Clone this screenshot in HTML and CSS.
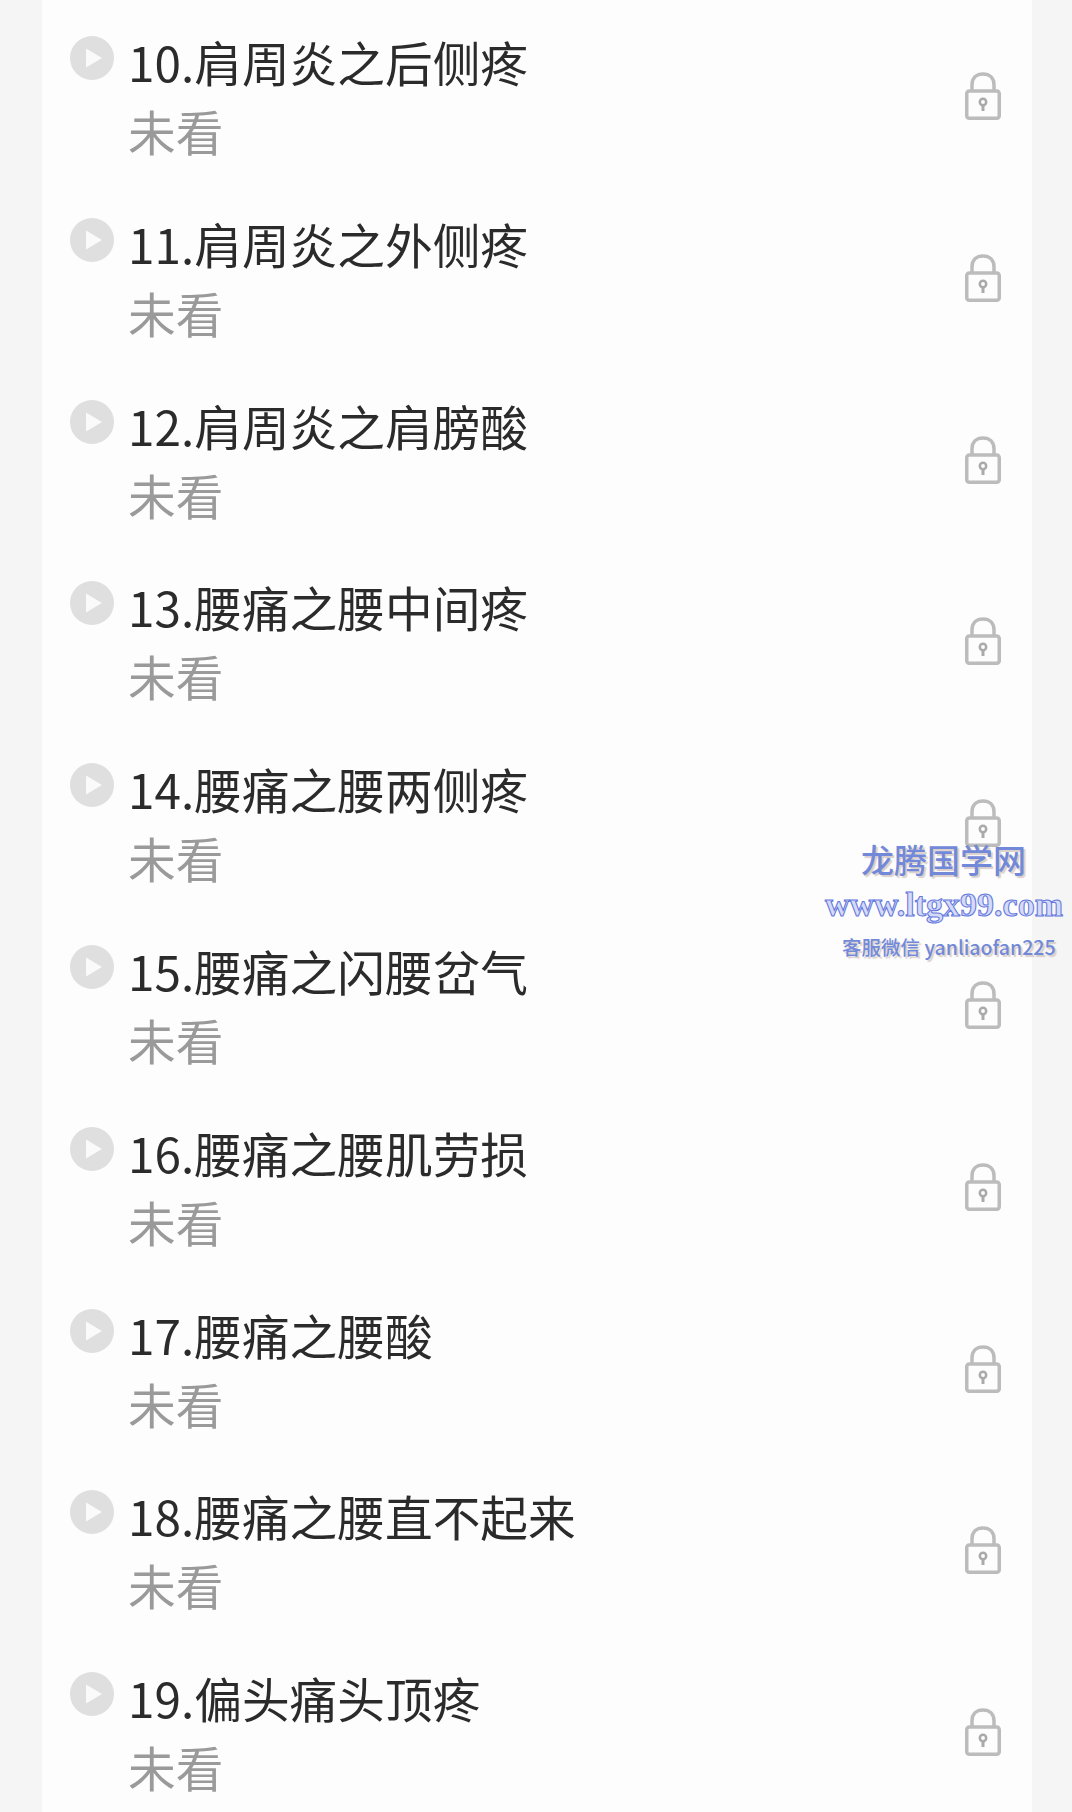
FILE: index.html
```html
<!DOCTYPE html>
<html lang="zh-CN">
<head>
    <meta charset="UTF-8">
    <meta name="viewport" content="width=device-width, initial-scale=1.0">
    <title>课程目录</title>
    <link rel="stylesheet" href="styles.css">
</head>
<body>
    <svg class="icon-defs" aria-hidden="true">
        <symbol id="play" viewBox="0 0 44 44">
            <circle cx="22" cy="22" r="22" fill="#dfdfdf"/>
            <path d="M16 12.5 L32 22 L16 31.5 Z" fill="#fafafa"/>
        </symbol>
        <symbol id="lock" viewBox="0 0 36 48">
            <path d="M7 19 V13 C7 6 11.5 2 18 2 C24.500 2 29 6 29 13 V19" fill="none" stroke="#bcbcbc" stroke-width="3.500"/>
            <rect x="1.750" y="19" width="32.500" height="27.250" rx="2.500" fill="none" stroke="#bcbcbc" stroke-width="3.500"/>
            <circle cx="18" cy="30" r="3.200" fill="none" stroke="#aaa" stroke-width="2.500"/>
            <path d="M18 33 V39" stroke="#aaa" stroke-width="3"/>
        </symbol>
    </svg>

    <div class="panel">
        <div class="lesson">
            <svg class="play"><use href="#play"/></svg>
            <div class="info">
                <div class="name">10.肩周炎之后侧疼</div>
                <div class="state">未看</div>
            </div>
            <svg class="lock"><use href="#lock"/></svg>
        </div>
        <div class="lesson">
            <svg class="play"><use href="#play"/></svg>
            <div class="info">
                <div class="name">11.肩周炎之外侧疼</div>
                <div class="state">未看</div>
            </div>
            <svg class="lock"><use href="#lock"/></svg>
        </div>
        <div class="lesson">
            <svg class="play"><use href="#play"/></svg>
            <div class="info">
                <div class="name">12.肩周炎之肩膀酸</div>
                <div class="state">未看</div>
            </div>
            <svg class="lock"><use href="#lock"/></svg>
        </div>
        <div class="lesson">
            <svg class="play"><use href="#play"/></svg>
            <div class="info">
                <div class="name">13.腰痛之腰中间疼</div>
                <div class="state">未看</div>
            </div>
            <svg class="lock"><use href="#lock"/></svg>
        </div>
        <div class="lesson">
            <svg class="play"><use href="#play"/></svg>
            <div class="info">
                <div class="name">14.腰痛之腰两侧疼</div>
                <div class="state">未看</div>
            </div>
            <svg class="lock"><use href="#lock"/></svg>
        </div>
        <div class="lesson">
            <svg class="play"><use href="#play"/></svg>
            <div class="info">
                <div class="name">15.腰痛之闪腰岔气</div>
                <div class="state">未看</div>
            </div>
            <svg class="lock"><use href="#lock"/></svg>
        </div>
        <div class="lesson">
            <svg class="play"><use href="#play"/></svg>
            <div class="info">
                <div class="name">16.腰痛之腰肌劳损</div>
                <div class="state">未看</div>
            </div>
            <svg class="lock"><use href="#lock"/></svg>
        </div>
        <div class="lesson">
            <svg class="play"><use href="#play"/></svg>
            <div class="info">
                <div class="name">17.腰痛之腰酸</div>
                <div class="state">未看</div>
            </div>
            <svg class="lock"><use href="#lock"/></svg>
        </div>
        <div class="lesson">
            <svg class="play"><use href="#play"/></svg>
            <div class="info">
                <div class="name">18.腰痛之腰直不起来</div>
                <div class="state">未看</div>
            </div>
            <svg class="lock"><use href="#lock"/></svg>
        </div>
        <div class="lesson">
            <svg class="play"><use href="#play"/></svg>
            <div class="info">
                <div class="name">19.偏头痛头顶疼</div>
                <div class="state">未看</div>
            </div>
            <svg class="lock"><use href="#lock"/></svg>
        </div>
    </div>

    <div class="watermark">
        <div class="wm-name">龙腾国学网</div>
        <div class="wm-url">www.ltgx99.com</div>
        <div class="wm-contact">客服微信 yanliaofan225</div>
    </div>
</body>
</html>
```

FILE: styles.css
```css
html,
body {
    height: 100%;
}
body {
    font-family: "Noto Sans CJK SC", "Noto Sans", sans-serif;
    background-color: #f5f5f6;
    margin: 0;
    padding: 0;
    overflow: hidden;
}
.icon-defs {
    display: none;
}
.panel {
    width: 990px;
    height: 100%;
    margin-left: 42px;
    background-color: #fdfdfe;
    filter: blur(0.7px);
}
.lesson {
    display: flex;
    align-items: flex-start;
    height: 181.8px;
    padding: 36px 31px 0 28px;
    box-sizing: border-box;
}
.play {
    flex: none;
    width: 44px;
    height: 44px;
}
.info {
    flex: 1;
    margin-left: 14px;
    margin-top: -6px;
}
.name {
    font-size: 47.7px;
    line-height: 64px;
    color: #2b2b2b;
}
.state {
    font-size: 47.7px;
    line-height: 74px;
    color: #9a9a9a;
}
.lock {
    flex: none;
    width: 36px;
    height: 48px;
    margin-top: 36px;
}
.watermark {
    position: absolute;
    left: 820px;
    top: 836px;
    width: 250px;
    color: #7189d8;
    text-shadow: 2px 2px 1px rgba(190, 170, 160, 0.55);
}
.wm-name {
    margin-left: 41px;
    font-size: 33px;
    line-height: 46px;
    font-weight: 500;
}
.wm-url {
    margin-left: 5px;
    margin-top: 2px;
    font-family: "Liberation Serif", serif;
    font-size: 34px;
    font-weight: bold;
    letter-spacing: 0;
    line-height: 42px;
    color: #d5daf7;
    -webkit-text-stroke: 1px #6276dc;
    text-shadow: none;
    white-space: nowrap;
}
.wm-contact {
    margin-left: 22px;
    margin-top: 6px;
    font-size: 19.5px;
    font-weight: 500;
    line-height: 30px;
    white-space: nowrap;
}
```
